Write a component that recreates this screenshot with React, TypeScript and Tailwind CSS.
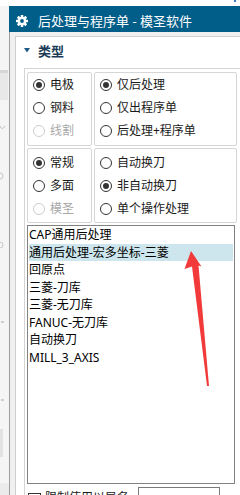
import clsx from 'clsx'

const LIST_ITEMS = [
  'CAP通用后处理',
  '通用后处理-宏多坐标-三菱',
  '回原点',
  '三菱-刀库',
  '三菱-无刀库',
  'FANUC-无刀库',
  '自动换刀',
  'MILL_3_AXIS',
]

function Gear() {
  return (
    <svg width="12" height="12" viewBox="0 0 12 12" className="shrink-0">
      {[0, 45, 90, 135].map((deg) => (
        <rect key={deg} x="4.7" y="0" width="2.6" height="12" rx="0.4" fill="white" transform={`rotate(${deg} 6 6)`} />
      ))}
      <circle cx="6" cy="6" r="4.3" fill="white" />
      <circle cx="6" cy="6" r="1.9" fill="#015e88" />
    </svg>
  )
}

function Radio({ label, checked, disabled }: { label: string; checked?: boolean; disabled?: boolean }) {
  return (
    <div className="flex h-[23px] items-center gap-[5px] pl-[5px]">
      <span
        className={clsx(
          'flex h-[12px] w-[12px] shrink-0 items-center justify-center rounded-full border bg-white',
          disabled ? 'border-[#cdcdcd]' : 'border-[#333333]'
        )}
      >
        {checked && <span className="h-[6px] w-[6px] rounded-full bg-[#333333]" />}
      </span>
      <span className={clsx('whitespace-nowrap text-[12px] leading-[16px]', disabled ? 'text-[#a8a8a8]' : 'text-[#1a1a1a]')}>
        {label}
      </span>
    </div>
  )
}

function LeftStrip() {
  return (
    <div className="flex w-[9px] shrink-0 flex-col bg-[#f5f5f5]">
      <div className="mt-[64px] h-[30px] w-[8px] border-t-[3px] border-[#d6d6d6] bg-[#e8e8e8]" />
      <svg width="6" height="7" className="mt-[25px]">
        <path d="M0 1 Q2 6 5 1" stroke="#c4c4c4" fill="none" />
      </svg>
      <svg width="5" height="8" className="mt-[40px]">
        <circle cx="0" cy="4" r="3" stroke="#c4c4c4" fill="none" />
      </svg>
      <svg width="5" height="8" className="mt-[61px]">
        <circle cx="0" cy="4" r="3" stroke="#c8c8c8" fill="none" />
      </svg>
      <div className="ml-[1px] mt-[73px] h-[2px] w-[3px] bg-[#cfcfcf]" />
      <div className="ml-[1px] mt-[76px] h-[2px] w-[3px] bg-[#cfcfcf]" />
      <div className="mt-[28px] h-[28px] w-[3px] bg-[#e2e2e2]" />
      <div className="mt-[26px] h-[12px] w-[9px] bg-[#ebebeb]" />
    </div>
  )
}

export default function App() {
  return (
    <div className="relative flex h-[495px] w-[240px] flex-col overflow-hidden bg-white font-['Noto_Sans','Noto_Sans_CJK_SC',sans-serif]">
      <div className="flex h-[6px] shrink-0 justify-end pr-[4px]">
        <span className="h-[2px] w-[2px] bg-[#3b7fc0]" />
      </div>

      <div className="flex min-h-0 flex-1">
        <LeftStrip />

        <div className="flex min-w-0 flex-1 flex-col">
          <div className="flex h-[26px] shrink-0 items-center gap-[10px] bg-[#015e88] pl-[7px] pt-[4px]">
            <Gear />
            <span className="whitespace-nowrap text-[13px] leading-[18px] text-white">后处理与程序单 - 模圣软件</span>
          </div>

          <div className="flex-1 border-l border-[#9e9e9e] bg-[#f0f0f0] pl-[5px] pt-[4px]">
            <div className="h-full border-l border-t border-[#cfcfcf] bg-white">
              <div className="flex h-[31px] items-center gap-[8px] pb-[4px] pl-[8px]">
                <svg width="6" height="5" viewBox="0 0 6 5">
                  <path d="M0 0 H6 L3 4.5 Z" fill="#1e5a85" />
                </svg>
                <span className="text-[13px] font-bold leading-[18px] text-[#1c3b57]">类型</span>
              </div>

              <div className="ml-[8px] h-full border-l border-t border-[#d4d4d4] pl-[2px] pt-[3px]">
                <div className="flex w-[210px] flex-col gap-[2px]">
                  <div className="grid grid-cols-[65px_143px] gap-[2px]">
                    <div className="h-[74px] rounded-[2px] border border-[#d6d6d6]">
                      <Radio label="电极" checked />
                      <Radio label="钢料" />
                      <Radio label="线割" disabled />
                    </div>
                    <div className="h-[74px] rounded-[2px] border border-[#d6d6d6]">
                      <Radio label="仅后处理" checked />
                      <Radio label="仅出程序单" />
                      <Radio label="后处理+程序单" />
                    </div>
                  </div>

                  <div className="grid grid-cols-[65px_143px] gap-[2px]">
                    <div className="h-[75px] rounded-[2px] border border-[#d6d6d6] pt-[2px]">
                      <Radio label="常规" checked />
                      <Radio label="多面" />
                      <Radio label="模圣" disabled />
                    </div>
                    <div className="h-[75px] rounded-[2px] border border-[#d6d6d6] pt-[2px]">
                      <Radio label="自动换刀" />
                      <Radio label="非自动换刀" checked />
                      <Radio label="单个操作处理" />
                    </div>
                  </div>

                  <div className="h-[259px] w-[208px] border border-[#828282] bg-white px-[1px]">
                    {LIST_ITEMS.map((item, i) => (
                      <div
                        key={item}
                        className={clsx(
                          'h-[17.5px] whitespace-nowrap text-[12px] leading-[17.5px] text-black',
                          i === 1 && 'bg-[#cde6ed]'
                        )}
                      >
                        {item}
                      </div>
                    ))}
                  </div>

                  <div className="flex items-start">
                    <span className="ml-[1px] mt-[7px] h-[13px] w-[13px] shrink-0 border border-[#333333] bg-white" />
                    <span className="ml-[4px] mt-[4px] w-[93px] whitespace-nowrap text-[12px] leading-[16px] text-[#1a1a1a]">
                      限制使用以异名
                    </span>
                    <span className="mt-[1px] h-[20px] w-[82px] border border-[#7a7a7a] bg-white" />
                  </div>
                </div>
              </div>
            </div>
          </div>
        </div>
      </div>

      <svg className="pointer-events-none absolute left-0 top-0" width="240" height="495">
        <path
          d="M191 251 L184.5 269 L192 266.5 L207 386 L209 386 L198.5 265.5 L201.5 266.5 Z"
          fill="#f23a3a"
        />
      </svg>
    </div>
  )
}
